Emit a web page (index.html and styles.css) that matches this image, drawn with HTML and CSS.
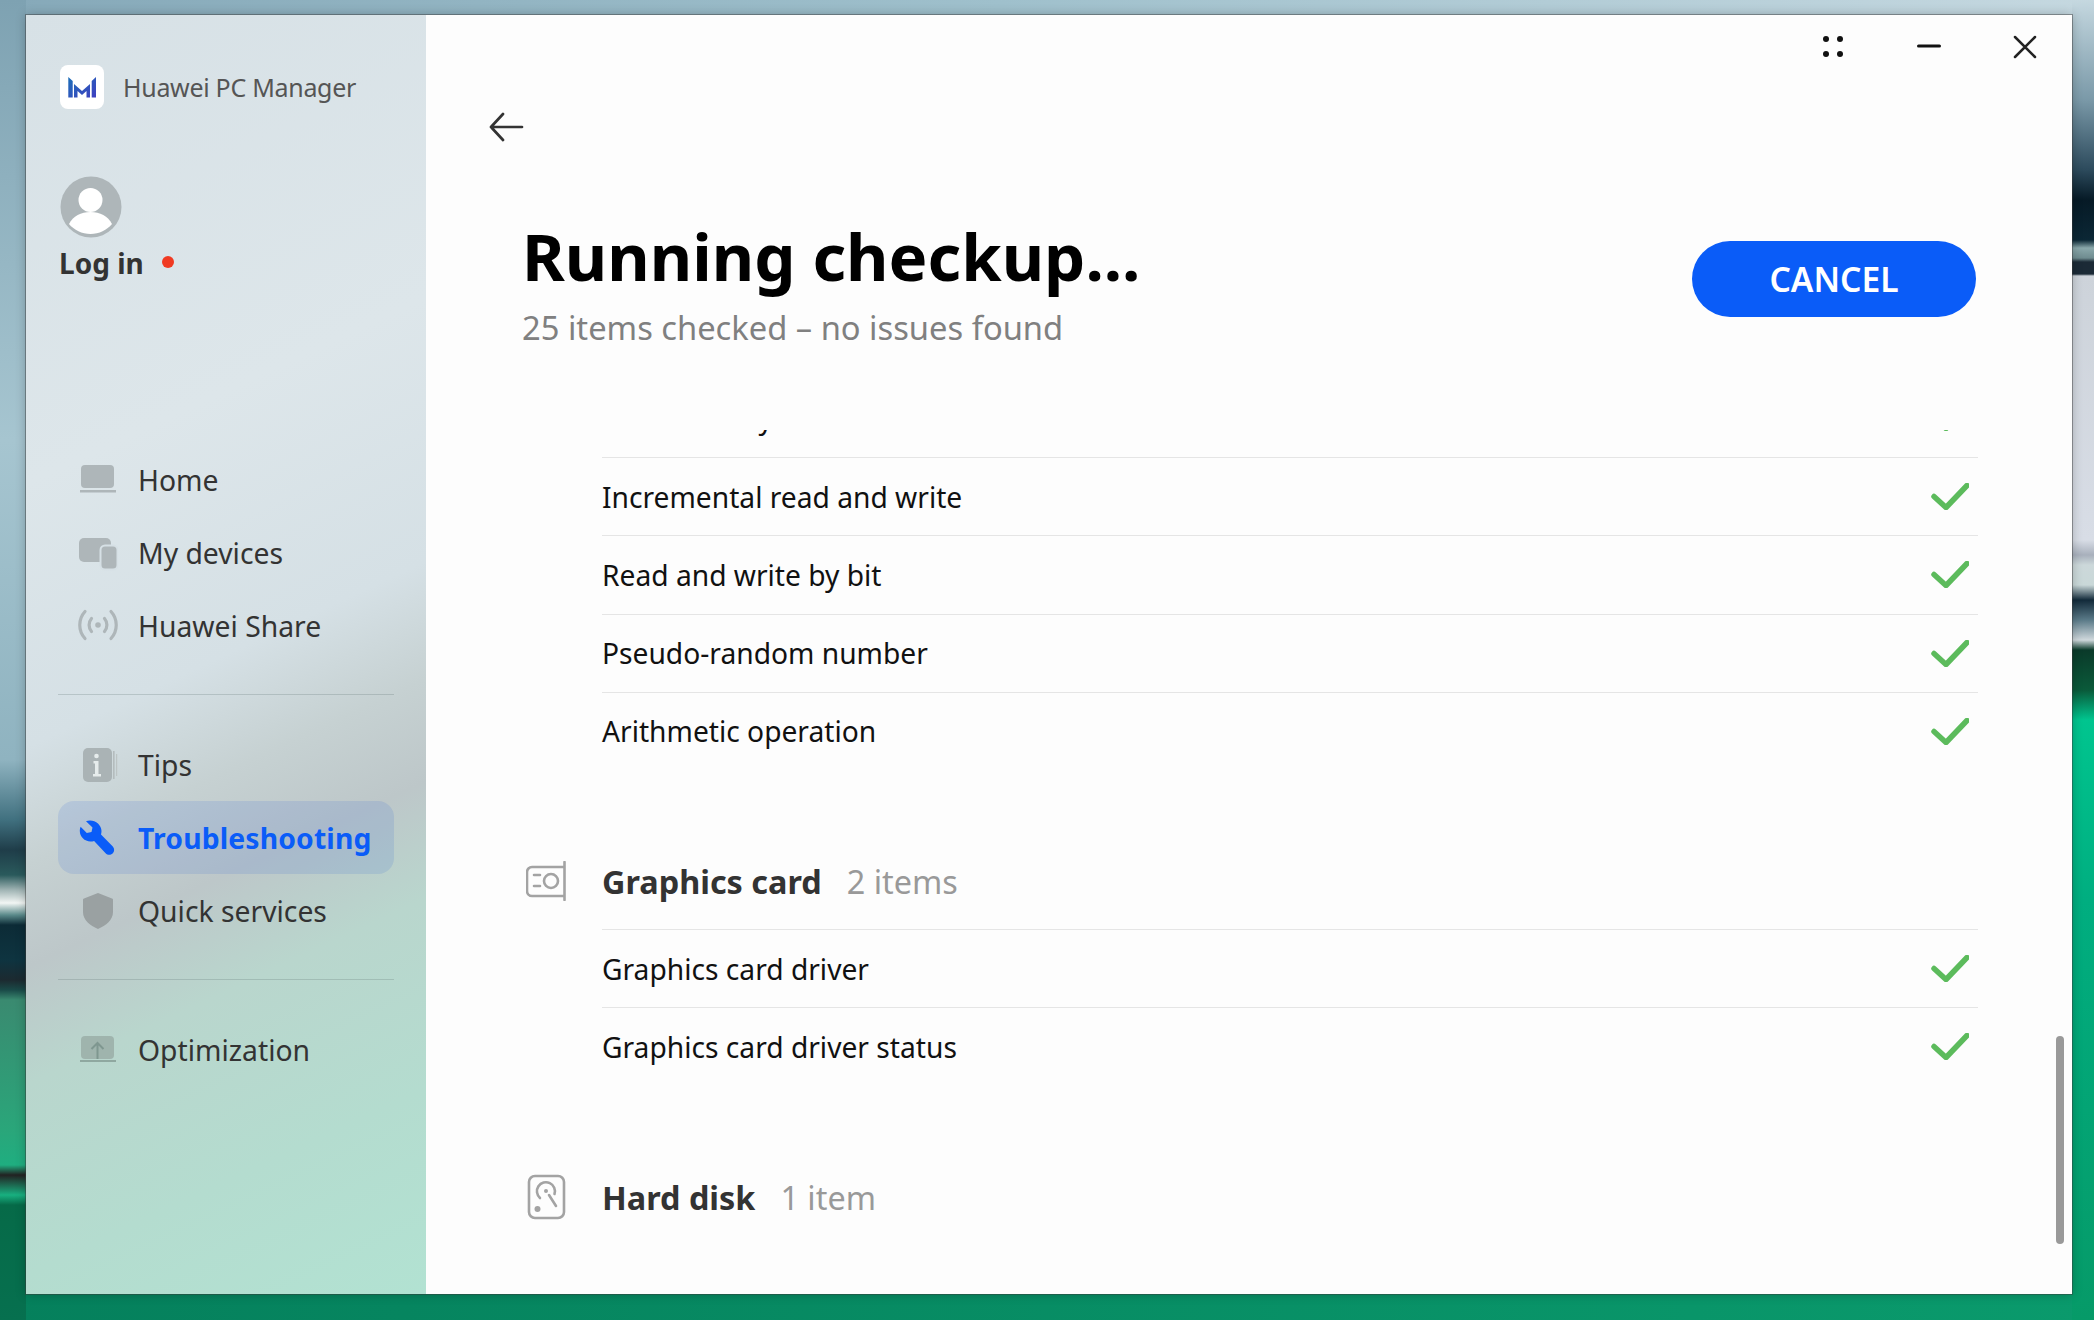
FILE: index.html
```html
<!DOCTYPE html>
<html lang="en">
<head>
<meta charset="utf-8">
<title>Huawei PC Manager</title>
<link rel="stylesheet" href="styles.css">
</head>
<body>
<div class="window">
  <aside class="sidebar">
    <div class="brand">
      <div class="brand-logo">
        <svg width="44" height="44" viewBox="0 0 44 44"><defs><linearGradient id="lg" x1="0" y1="0" x2="1" y2="1"><stop offset="0" stop-color="#1c6fb8"/><stop offset="1" stop-color="#3f3fc0"/></linearGradient></defs><path fill="url(#lg)" d="M8.300 12l4.400 4v16.500H8.300zM36 12v20.500h-4.300V16zM14 19l8 7 8-7v13.500h-3.500V26L22 30l-4.500-4v6.500H14z"/></svg>
      </div>
      <span class="brand-name">Huawei PC Manager</span>
    </div>
    <div class="avatar">
      <svg width="62" height="62" viewBox="0 0 62 62"><circle cx="31" cy="31" r="30.500" fill="#aeb6b9"/><circle cx="30.500" cy="24" r="12" fill="#fff"/><path fill="#fff" d="M9 48c4-8 12-12 21.500-12S48 40 52 48c-5 6-13 10-21.500 10S14 54 9 48z"/></svg>
    </div>
    <div class="login"><span>Log in</span><i class="login-dot"></i></div>
    <nav class="nav">
      <a class="nav-item">
        <svg class="nav-icon" viewBox="0 0 40 40"><rect x="3" y="5" width="33" height="23" rx="4" fill="#aeb6b9"/><rect x="2" y="30" width="36" height="2.500" fill="#aeb6b9"/></svg>
        <span>Home</span>
      </a>
      <a class="nav-item">
        <svg class="nav-icon" viewBox="0 0 40 40"><rect x="1" y="5" width="32" height="24" rx="5" fill="#aeb6b9"/><rect x="22.500" y="12.500" width="17" height="24" rx="4.500" fill="#aeb6b9" stroke="#d6e0e5" stroke-width="2"/></svg>
        <span>My devices</span>
      </a>
      <a class="nav-item">
        <svg class="nav-icon" viewBox="0 0 40 40" fill="none" stroke="#aeb6b9" stroke-width="3.200" stroke-linecap="round"><circle cx="20" cy="19" r="2.800" fill="#aeb6b9" stroke="none"/><path d="M13.500 12.500a10 10 0 0 0 0 13M26.500 12.500a10 10 0 0 1 0 13M7 5.500a20 20 0 0 0 0 27M33 5.500a20 20 0 0 1 0 27"/></svg>
        <span>Huawei Share</span>
      </a>
      <hr class="nav-rule">
      <a class="nav-item">
        <svg class="nav-icon" viewBox="0 0 40 40"><rect x="5" y="3" width="29" height="34" rx="5" fill="#aab3b5"/><rect x="35" y="6" width="1.600" height="28" fill="#b4bcbd"/><rect x="38" y="9" width="1.200" height="22" fill="#bcc4c4"/><circle cx="18.500" cy="11" r="2.300" fill="#e6ecec"/><path fill="#e6ecec" d="M15.500 16h5v13h2.500v2.500h-8V29H17V18.500h-1.500z"/></svg>
        <span>Tips</span>
      </a>
      <a class="nav-item is-active">
        <svg class="nav-icon" viewBox="0 0 40 40"><path fill="#0a5cf8" d="M12 2.500c-1.500 0-2.800.3-4 .8l6.500 6.200-1 4.500-4.700 1.100L2.600 8.800C2 10 1.800 11.400 1.800 12.800c0 6 4.800 10.700 10.700 10.700 1.300 0 2.500-.2 3.600-.6l11.500 12.400c1.900 2 5 2.100 7 .2 2-1.900 2.100-5 .2-7L23 16.600c.3-1.100.5-2.300.5-3.500C23.500 7.200 18 2.500 12 2.500z"/></svg>
        <span>Troubleshooting</span>
      </a>
      <a class="nav-item">
        <svg class="nav-icon" viewBox="0 0 40 40"><path fill="#9aa1a2" d="M20 2l14 5.500c.8.300 1 .8 1 1.500v12c0 8-7 13.500-15 17C12 34.500 5 29 5 21V9c0-.7.200-1.200 1-1.500z"/></svg>
        <span>Quick services</span>
      </a>
      <hr class="nav-rule">
      <a class="nav-item">
        <svg class="nav-icon" viewBox="0 0 40 40"><rect x="3" y="6" width="33" height="23" rx="4" fill="#9fb4ad"/><rect x="2" y="30" width="36" height="2" fill="#8fa8a0"/><path fill="none" stroke="#7f9790" stroke-width="2" d="M19.500 29V13M13.500 19l6-6 6 6"/></svg>
        <span>Optimization</span>
      </a>
    </nav>
  </aside>

  <main class="main">
    <div class="titlebar">
      <svg class="tb-icon" width="24" height="24" viewBox="0 0 24 24" fill="#111"><circle cx="5" cy="4" r="3"/><circle cx="19" cy="4" r="3"/><circle cx="5" cy="19" r="3"/><circle cx="19" cy="19" r="3"/></svg>
      <svg class="tb-icon" width="24" height="24" viewBox="0 0 24 24"><rect x="0" y="9.500" width="24" height="3" rx="1.500" fill="#111"/></svg>
      <svg class="tb-icon" width="24" height="24" viewBox="0 0 24 24" fill="none" stroke="#222" stroke-width="2.500" stroke-linecap="round"><path d="M2 2l20 20M22 2L2 22"/></svg>
    </div>
    <div class="back">
      <svg width="36" height="30" viewBox="0 0 36 30" fill="none" stroke="#333" stroke-width="2.700" stroke-linecap="round" stroke-linejoin="round"><path d="M3 15h31M15 2L3 15l12 13"/></svg>
    </div>
    <header class="head">
      <div class="head-text">
        <h1 class="title">Running checkup...</h1>
        <p class="subtitle">25 items checked – no issues found</p>
      </div>
      <button class="cancel">CANCEL</button>
    </header>

    <div class="list">
      <div class="rows rows-scrolled">
        <div class="row is-first"><span class="row-clipped">Write memory</span><svg class="check" viewBox="0 0 38 27"><path d="M3 13.500l12 11L36 2.500"/></svg></div>
        <div class="row"><span>Incremental read and write</span><svg class="check" viewBox="0 0 38 27"><path d="M3 13.500l12 11L36 2.500"/></svg></div>
        <div class="row"><span>Read and write by bit</span><svg class="check" viewBox="0 0 38 27"><path d="M3 13.500l12 11L36 2.500"/></svg></div>
        <div class="row"><span>Pseudo-random number</span><svg class="check" viewBox="0 0 38 27"><path d="M3 13.500l12 11L36 2.500"/></svg></div>
        <div class="row"><span>Arithmetic operation</span><svg class="check" viewBox="0 0 38 27"><path d="M3 13.500l12 11L36 2.500"/></svg></div>
      </div>

      <section class="group">
        <div class="group-head">
          <div class="group-icon">
            <svg width="42" height="40" viewBox="0 0 42 40" fill="none" stroke="#a3a3a3" stroke-width="2.600" stroke-linecap="round"><path d="M39.500 1v38M39 6H7a5 5 0 0 0-5 5v19a5 5 0 0 0 5 5h32"/><path d="M9 14h6M9 25h6"/><circle cx="26" cy="20" r="7"/></svg>
          </div>
          <span class="group-name">Graphics card</span><span class="group-count">2 items</span>
        </div>
        <div class="rows">
          <div class="row"><span>Graphics card driver</span><svg class="check" viewBox="0 0 38 27"><path d="M3 13.500l12 11L36 2.500"/></svg></div>
          <div class="row"><span>Graphics card driver status</span><svg class="check" viewBox="0 0 38 27"><path d="M3 13.500l12 11L36 2.500"/></svg></div>
        </div>
      </section>

      <section class="group">
        <div class="group-head">
          <div class="group-icon">
            <svg width="42" height="46" viewBox="0 0 42 46" fill="none" stroke="#a3a3a3" stroke-width="2.600" stroke-linecap="round"><rect x="4" y="2" width="35" height="42" rx="6"/><path d="M15 24a9 9 0 1 1 14.500-4"/><path d="M24 21l7 11"/><circle cx="21" cy="17" r="2" fill="#a3a3a3" stroke="none"/><circle cx="12.500" cy="35" r="3" fill="#a3a3a3" stroke="none"/></svg>
          </div>
          <span class="group-name">Hard disk</span><span class="group-count">1 item</span>
        </div>
      </section>
    </div>
    <div class="scrollbar"></div>
  </main>
</div>
</body>
</html>
```
FILE: styles.css
```css
* { box-sizing: border-box; }
html, body { margin: 0; height: 100%; }
body {
  width: 2094px;
  height: 1320px;
  overflow: hidden;
  padding: 15px 22px 26px 26px;
  font-family: "Noto Sans", "Open Sans", sans-serif;
  background-color: #0a9a6c;
  background-repeat: no-repeat;
  background-image:
    linear-gradient(180deg, #7ea2b2 0, #a6c5d0 440px, #8fb3c0 760px, #40707f 820px, #1f3d49 850px, #2a5a5c 875px, #a0b4b4 890px, #f2f6f4 903px, #5a8a8a 915px, #0c2b36 925px, #0e3440 960px, #1c2a30 980px, #1a4a48 990px, #3a8a70 1000px, #2aa67a 1130px, #1fae80 1165px, #222 1175px, #18b080 1195px, #066a48 1205px, #06704f 1320px),
    linear-gradient(180deg, #c5d8e0 0, #7a99a8 100px, #2c4a5c 170px, #061a26 200px, #0b2735 240px, #8aa8ab 248px, #6f8c90 258px, #1b2a36 262px, #1b2a36 274px, #cdd3da 276px, #d8dde6 540px, #a8b0bc 555px, #ccd8da 565px, #c9d8d8 585px, #122a3a 600px, #5a7a88 620px, #cfd8dc 640px, #0a3a2a 650px, #0a5a3a 690px, #00c58f 720px, #00ae80 900px, #069a68 1320px),
    linear-gradient(90deg, #86a9b9 0, #9fc0cc 1000px, #c5d8e0 100%),
    linear-gradient(90deg, #05805c 0, #0a9a6c 100%);
  background-size: 26px 100%, 22px 100%, 100% 15px, 100% 26px;
  background-position: left top, right top, left top, left bottom;
}

.window {
  display: flex;
  width: 2046px;
  height: 1279px;
  overflow: hidden;
  background: #fdfdfd;
  box-shadow: 0 0 0 1px rgba(60, 60, 60, 0.45), 0 0 10px rgba(0, 0, 0, 0.25);
}

/* Sidebar */
.sidebar {
  flex: 0 0 400px;
  padding: 50px 32px 0 32px;
  background: linear-gradient(155deg, #d7e1e6 0, #dde6ea 32%, #d5e0e5 50%, #c6d1d2 58%, #bdc7c9 65%, #b9d6cd 73%, #b4dccf 86%, #b2e2d2 100%);
}
.brand { display: flex; align-items: center; gap: 19px; margin-left: 2px; }
.brand-logo { width: 44px; height: 44px; border-radius: 8px; background: #fff; }
.brand-logo svg { display: block; }
.brand-name { font-size: 25px; letter-spacing: -0.3px; color: #555; }
.avatar { height: 62px; margin-top: 67px; margin-left: 2px; }
.avatar svg { display: block; }
.login { display: flex; align-items: center; gap: 18px; height: 44px; margin-top: 3px; margin-left: 1px; font-size: 28px; font-weight: 700; color: #333; }
.login-dot { width: 12px; height: 12px; border-radius: 50%; background: #f03a22; margin-top: -2px; }

.nav { margin-top: 158px; }
.nav-item { display: flex; align-items: center; gap: 20px; height: 73px; padding-left: 20px; font-size: 28.300px; color: #333; border-radius: 16px; }
.nav-icon { flex: none; width: 40px; height: 40px; }
.nav-item.is-active { font-weight: 700; letter-spacing: 0.15px; color: #0a5cf8; background: rgba(40, 90, 220, 0.13); }
.nav-rule { height: 1px; margin: 32px 0 33px; border: 0; background: rgba(90, 110, 110, 0.25); }

/* Main */
.main { position: relative; flex: 1; min-width: 0; display: flex; flex-direction: column; }
.titlebar { flex: none; display: flex; justify-content: flex-end; gap: 72px; height: 32px; padding: 20px 35px 0 0; }
.tb-icon { display: block; flex: none; }
.back { flex: none; height: 30px; margin: 65px 0 0 62px; }
.back svg { display: block; }
.head { flex: none; display: flex; justify-content: space-between; align-items: flex-start; height: 288px; margin: 0 96px 0 96px; }
.head-text { margin-top: 72px; }
.title { margin: 0; font-size: 65.300px; line-height: 84px; font-weight: 700; color: #000; }
.subtitle { margin: 8px 0 0; font-size: 32.700px; line-height: 44px; color: #808080; }
.cancel { flex: none; width: 284px; height: 76px; margin-top: 99px; border: 0; border-radius: 38px; background: #0a5cf8; color: #fff; font: 600 33.600px "Noto Sans", sans-serif; }

.list { flex: 1; min-height: 0; overflow: hidden; margin: 0 94px 0 100px; }
.rows { margin-left: 76px; }
.rows-scrolled { margin-top: -51.250px; }
.row { display: flex; align-items: center; justify-content: space-between; height: 78.250px; padding-right: 9px; border-top: 1px solid #e5e5e5; font-size: 28.200px; color: #111; }
.row.is-first { border-top: 0; }
.row-clipped { margin-left: -19px; }
.check { flex: none; width: 38px; height: 27px; fill: none; stroke: #5cbb5c; stroke-width: 5.500; stroke-linecap: round; stroke-linejoin: round; }

.group { margin-top: 63px; }
.group-head { display: flex; align-items: center; height: 96px; }
.group-icon { flex: none; width: 76px; margin-left: -1px; margin-right: 1px; display: flex; }
.group-icon svg { display: block; }
.group-name { font-size: 32.400px; font-weight: 700; color: #333; }
.group-count { margin-left: 25px; font-size: 32.400px; color: #999; }

.scrollbar { position: absolute; right: 8px; top: 1021px; width: 8px; height: 208px; border-radius: 4px; background: #999; }
```
